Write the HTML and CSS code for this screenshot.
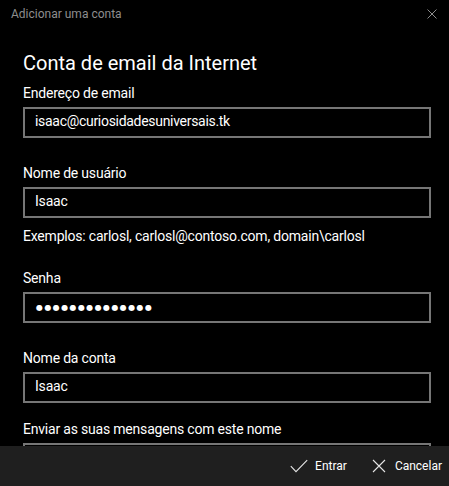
FILE: index.html
```html
<!DOCTYPE html>
<html lang="pt-BR">
<head>
<meta charset="utf-8">
<title>Adicionar uma conta</title>
<link rel="stylesheet" href="styles.css">
</head>
<body>
<div class="window">
  <div class="titlebar">
    <span class="title">Adicionar uma conta</span>
    <svg class="close" width="10" height="10" viewBox="0 0 10 10"><path d="M0.5 0.5 L9.5 9.5 M9.5 0.5 L0.5 9.5" stroke="#8c8c8c" stroke-width="1" fill="none"/></svg>
  </div>
  <div class="content">
    <h1 class="heading">Conta de email da Internet</h1>
    <div class="field first">
      <div class="label">Endereço de email</div>
      <div class="input email">isaac@curiosidadesuniversais.tk</div>
    </div>
    <div class="field">
      <div class="label">Nome de usuário</div>
      <div class="input">Isaac</div>
      <div class="hint">Exemplos: carlosl, carlosl@contoso.com, domain\carlosl</div>
    </div>
    <div class="field after-hint">
      <div class="label">Senha</div>
      <div class="input password">●●●●●●●●●●●●●●</div>
    </div>
    <div class="field">
      <div class="label">Nome da conta</div>
      <div class="input">Isaac</div>
    </div>
    <div class="field last">
      <div class="label">Enviar as suas mensagens com este nome</div>
      <div class="input">Isaac</div>
    </div>
  </div>
  <div class="commandbar">
    <div class="cmd ok">
      <svg class="icon" width="18" height="14" viewBox="0 0 18 14"><path d="M0.8 7.2 L6 12.6 L17.2 1.2" stroke="#e6e6e6" stroke-width="1.1" fill="none"/></svg>
      <span>Entrar</span>
    </div>
    <div class="cmd cancel">
      <svg class="icon" width="14" height="14" viewBox="0 0 14 14"><path d="M1 1 L13 13 M13 1 L1 13" stroke="#e6e6e6" stroke-width="1.1" fill="none"/></svg>
      <span>Cancelar</span>
    </div>
  </div>
</div>
</body>
</html>
```
FILE: styles.css
```css
html, body {
  margin: 0;
  padding: 0;
  background: #000;
  height: 100%;
  overflow: hidden;
}
body {
  font-family: Roboto, "Open Sans", sans-serif;
  color: #fff;
}
.window {
  height: 486px;
  overflow: hidden;
}
.titlebar {
  height: 30px;
  display: flex;
  justify-content: space-between;
  align-items: flex-start;
  padding: 0 12px 0 11px;
}
.title {
  margin-top: 6px;
  font-size: 12px;
  line-height: 16px;
  color: #8e8e8e;
}
.close {
  margin-top: 9px;
  display: block;
}
.content {
  padding: 0 18px 0 23px;
}
.heading {
  margin: 19px 0 0;
  font-size: 20px;
  line-height: 28px;
  font-weight: 400;
  color: #fff;
}
.field {
  margin-top: 25px;
}
.field.first {
  margin-top: 6px;
}
.field.after-hint {
  margin-top: 22px;
}
.field.last {
  margin-top: 16px;
}
.label {
  font-size: 14px;
  line-height: 20px;
  letter-spacing: -0.2px;
  margin-bottom: 4px;
}
.input {
  box-sizing: border-box;
  height: 31px;
  border: 2px solid #767676;
  padding: 0 10px 2px;
  font-size: 14px;
  line-height: 25px;
  letter-spacing: -0.2px;
  white-space: nowrap;
  overflow: hidden;
}
.input.email {
  letter-spacing: -0.3px;
}
.input.password {
  font-family: "DejaVu Sans", sans-serif;
  font-size: 8px;
  letter-spacing: 1.4px;
  line-height: 27px;
  padding-bottom: 0;
  padding-left: 11px;
}
.hint {
  margin-top: 8px;
  font-size: 14px;
  line-height: 20px;
  letter-spacing: -0.2px;
}
.commandbar {
  position: fixed;
  left: 0;
  right: 0;
  bottom: 0;
  height: 40px;
  background: #1f1f1f;
  display: flex;
  justify-content: flex-end;
  align-items: center;
  padding-right: 7px;
}
.cmd {
  display: flex;
  align-items: center;
  font-size: 12px;
  line-height: 16px;
  color: #fff;
}
.cmd .icon {
  display: block;
}
.ok .icon {
  margin-right: 7px;
}
.cancel {
  margin-left: 25px;
}
.cancel .icon {
  margin-right: 9px;
}
```
